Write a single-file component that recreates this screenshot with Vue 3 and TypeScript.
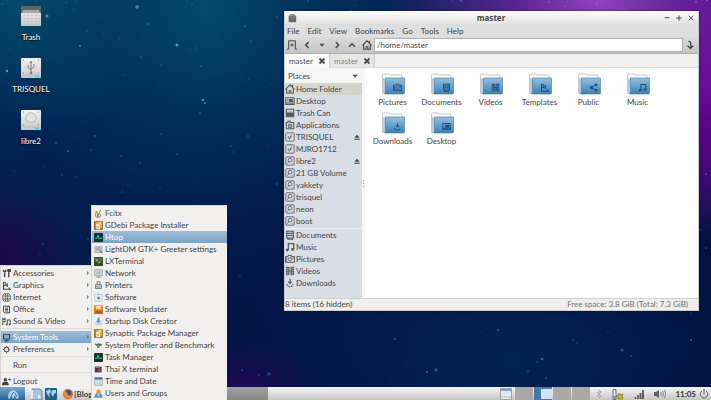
<script setup lang="ts">
import { ref } from 'vue'

interface Entry { label: string; icon: string }
interface Place extends Entry { eject?: boolean }
interface Star { x: number; y: number; r: number; o: number }

const volumes: Entry[] = [
  { label: 'Trash', icon: 'big-trash' },
  { label: 'TRISQUEL', icon: 'big-usb' },
  { label: 'libre2', icon: 'big-disk' },
]
const categories: Entry[] = [
  { label: 'Accessories', icon: 'tools' },
  { label: 'Graphics', icon: 'draw' },
  { label: 'Internet', icon: 'globe' },
  { label: 'Office', icon: 'doc' },
  { label: 'Sound & Video', icon: 'media' },
]
const system: Entry[] = [
  { label: 'System Tools', icon: 'monitor' },
  { label: 'Preferences', icon: 'gear' },
]
const tools: Entry[] = [
  { label: 'Fcitx', icon: 'fcitx' },
  { label: 'GDebi Package Installer', icon: 'package' },
  { label: 'Htop', icon: 'pulse' },
  { label: 'LightDM GTK+ Greeter settings', icon: 'greeter' },
  { label: 'LXTerminal', icon: 'terminal' },
  { label: 'Network', icon: 'network' },
  { label: 'Printers', icon: 'printer' },
  { label: 'Software', icon: 'software' },
  { label: 'Software Updater', icon: 'updater' },
  { label: 'Startup Disk Creator', icon: 'startup' },
  { label: 'Synaptic Package Manager', icon: 'package' },
  { label: 'System Profiler and Benchmark', icon: 'profiler' },
  { label: 'Task Manager', icon: 'pulse' },
  { label: 'Thai X terminal', icon: 'thai' },
  { label: 'Time and Date', icon: 'calendar' },
  { label: 'Users and Groups', icon: 'users' },
]
const menus = ['File', 'Edit', 'View', 'Bookmarks', 'Go', 'Tools', 'Help']
const navigation: Entry[] = [
  { label: 'New tab', icon: 'newtab' },
  { label: 'Back', icon: 'back' },
  { label: 'History', icon: 'caret' },
  { label: 'Forward', icon: 'forward' },
  { label: 'Up', icon: 'up' },
  { label: 'Home', icon: 'home' },
]
const places: Place[] = [
  { label: 'Home Folder', icon: 'home' },
  { label: 'Desktop', icon: 'desktop' },
  { label: 'Trash Can', icon: 'trash' },
  { label: 'Applications', icon: 'apps' },
  { label: 'TRISQUEL', icon: 'usb', eject: true },
  { label: 'MJRO1712', icon: 'usb' },
  { label: 'libre2', icon: 'disk', eject: true },
  { label: '21 GB Volume', icon: 'disk' },
  { label: 'yakkety', icon: 'disk' },
  { label: 'trisquel', icon: 'disk' },
  { label: 'neon', icon: 'disk' },
  { label: 'boot', icon: 'disk' },
]
const bookmarks: Entry[] = [
  { label: 'Documents', icon: 'docs' },
  { label: 'Music', icon: 'music' },
  { label: 'Pictures', icon: 'camera' },
  { label: 'Videos', icon: 'film' },
  { label: 'Downloads', icon: 'download' },
]
const folders: Entry[] = [
  { label: 'Pictures', icon: 'camera' },
  { label: 'Documents', icon: 'docs' },
  { label: 'Videos', icon: 'film' },
  { label: 'Templates', icon: 'draw' },
  { label: 'Public', icon: 'share' },
  { label: 'Music', icon: 'music' },
  { label: 'Downloads', icon: 'download' },
  { label: 'Desktop', icon: 'desktop' },
]

const path = ref('/home/master')
const place = ref('Home Folder')
const tab = ref(0)
const workspace = ref(1)

const bright: Star[] = [
  { x: 137, y: 7, r: 1.8, o: 0.6 }, { x: 177, y: 45, r: 1.5, o: 0.8 }, { x: 203, y: 100, r: 1.3, o: 0.6 },
  { x: 47, y: 16, r: 1.6, o: 0.6 }, { x: 7, y: 71, r: 1.2, o: 0.8 }, { x: 80, y: 46, r: 1, o: 0.6 },
  { x: 205, y: 103, r: 1, o: 0.6 }, { x: 138, y: 236, r: 1, o: 0.3 }, { x: 269, y: 374, r: 1.8, o: 0.3 },
  { x: 436, y: 370, r: 1.8, o: 0.35 }, { x: 622, y: 350, r: 1.5, o: 0.4 }, { x: 542, y: 359, r: 1.3, o: 0.5 },
  { x: 498, y: 330, r: 1, o: 0.5 }, { x: 691, y: 340, r: 1, o: 0.5 }, { x: 706, y: 174, r: 1, o: 0.4 },
]
function scatter(count: number): Star[] {
  let seed = 29
  const next = () => (seed = (seed * 16807) % 2147483647) / 2147483647
  return Array.from({ length: count }, () => {
    const y = next()
    return { x: Math.round(next() * 711), y: Math.round(y * y * 390), r: next() * 0.6 + 0.3, o: next() * 0.5 + 0.12 }
  })
}
const stars: Star[] = [...bright, ...scatter(330)]
</script>

<template>
  <div class="desktop">
    <svg class="sky" viewBox="0 0 711 400" preserveAspectRatio="xMidYMid slice" aria-hidden="true">
      <circle v-for="(s, i) in stars" :key="i" :cx="s.x" :cy="s.y" :r="s.r" :opacity="s.o" fill="#6db4e8" />
    </svg>

    <svg class="library" aria-hidden="true">
      <defs>
        <linearGradient id="metal" x2="0" y2="1"><stop stop-color="#f4f4f3" /><stop offset="1" stop-color="#c6c7c6" /></linearGradient>
        <linearGradient id="blue" x2="0" y2="1"><stop stop-color="#94c1e2" /><stop offset="1" stop-color="#3b81b7" /></linearGradient>
        <linearGradient id="orange" x2="0" y2="1"><stop stop-color="#f5a13c" /><stop offset="1" stop-color="#c2620c" /></linearGradient>
      </defs>
      <symbol id="big-trash" viewBox="0 0 22 22">
        <rect x="1" y="1" width="20" height="20" rx="1" fill="url(#metal)" />
        <path d="M1 1h20v7H1z" fill="#606465" /><path d="M3 5h16l1 3H2z" fill="#a4a8a8" />
        <path d="M4 10v10M8 10v10M12 10v10M16 10v10M19 10v10" stroke="#b4b4b4" stroke-dasharray="1 2" />
      </symbol>
      <symbol id="plate" viewBox="0 0 22 22">
        <rect x="1" y="1" width="20" height="20" rx="1" fill="url(#metal)" />
        <path d="M2 18h18" stroke="#b2b4b4" stroke-width=".7" /><path d="M15 19.500h4" stroke="#51cfd0" stroke-width="1.500" />
        <path d="M3 3h1M18 3h1M3 16h1M18 16h1" stroke="#818686" />
      </symbol>
      <symbol id="big-usb" viewBox="0 0 22 22">
        <use href="#plate" />
        <path d="M11 16V5M11 13L8 10.500V8M11 12l3-2V7" fill="none" stroke="#7b8080" />
        <path d="M9.500 6L11 3.500 12.500 6z" fill="#7b8080" /><circle cx="11" cy="16" r="1.300" fill="#7b8080" />
      </symbol>
      <symbol id="big-disk" viewBox="0 0 22 22">
        <use href="#plate" /><path d="M7 12a5 5 0 1 1 8 0l-2 1H9z" fill="#e6e6e5" stroke="#b7b9b9" />
      </symbol>

      <symbol id="tools" viewBox="0 0 12 12"><path d="M2 1v2l1.500 1L5 3V1M3.500 4v7M8 1h3v2H8zM9 3v8" fill="none" stroke="currentColor" stroke-width="1.800" /></symbol>
      <symbol id="draw" viewBox="0 0 12 12"><path d="M2 1v10h9L9 9M2 6h3V3M7 3v5M4 1v2" fill="none" stroke="currentColor" stroke-width="1.500" /></symbol>
      <symbol id="globe" viewBox="0 0 12 12"><path d="M3 1h6l2 2v6l-2 2H3L1 9V3zM4.500 1v10M7.500 1v10M1 4h10M1 8h10" fill="none" stroke="currentColor" /></symbol>
      <symbol id="doc" viewBox="0 0 12 12"><path d="M2 1.500h8v9H3.500L2 9zM4 4h4M4 6h4M4 8h4" fill="none" stroke="currentColor" stroke-width="1.300" /></symbol>
      <symbol id="media" viewBox="0 0 12 12"><path d="M1 1v10M4 1v6M1 3h3M1 6h3M7 10V4h4v6" fill="none" stroke="currentColor" stroke-width="1.400" stroke-dasharray="3 .5" /><path d="M5 9h2v2H5zM9 9h2v2H9z" fill="currentColor" /></symbol>
      <symbol id="monitor" viewBox="0 0 12 12"><path d="M2 2h8v6H2zM3 10.500h6M6 8v2" fill="none" stroke="currentColor" stroke-width="1.500" /></symbol>
      <symbol id="gear" viewBox="0 0 12 12"><circle cx="6" cy="6" r="3" fill="none" stroke="currentColor" stroke-width="1.300" /><path d="M6 1v2M6 9v2M1 6h2M9 6h2M2.500 2.500l1 1M8.500 8.500l1 1M2.500 9.500l1-1M8.500 3.500l1-1" stroke="currentColor" stroke-width="1.200" /></symbol>
      <symbol id="logout" viewBox="0 0 12 12"><circle cx="4.500" cy="3.500" r="2.300" fill="currentColor" /><path d="M0 11q0-5 4.500-5T9 11z" fill="currentColor" /><path d="M8 3h2V1l2 2.500-2 2V4H8z" fill="currentColor" /></symbol>

      <symbol id="fcitx" viewBox="0 0 12 12"><path d="M3 3l2 3v4L3 11 2 9zM9 1L5 9q0 2 2 2t2-3L7 6" fill="#f7e7b6" stroke="#776035" /><path d="M4 11h4" stroke="#dba11b" stroke-width="1.300" /></symbol>
      <symbol id="package" viewBox="0 0 12 12"><rect width="12" height="12" rx="1" fill="#a86a1e" /><path d="M2 1h9v9H2z" fill="#dca652" /><path d="M3 4h5v7H3z" fill="#f5e8cf" /><path d="M6 1h3v4H6z" fill="#f6d28c" /><path d="M4 8h3" stroke="#99601d" /></symbol>
      <symbol id="pulse" viewBox="0 0 12 12"><rect width="12" height="12" rx="1" fill="#1a302d" /><path d="M1 7h3l1.500-4L7 8l1-1h3" fill="none" stroke="#35dcbb" stroke-width="1.200" /></symbol>
      <symbol id="greeter" viewBox="0 0 12 12"><path d="M1 2h10v8H1z" fill="#c9caca" stroke="#a7aaaa" /><path d="M3 4h6M3 6h4" stroke="#808686" /><path d="M8 7l3 4" stroke="#5b6264" stroke-width="1.500" /></symbol>
      <symbol id="terminal" viewBox="0 0 12 12"><rect width="12" height="12" rx="1" fill="#354e20" /><path d="M1 1h10v5H1z" fill="#506d34" /><path d="M2.500 3l2 1.500-2 1.500M5.500 7H9" fill="none" stroke="#e1edcd" /></symbol>
      <symbol id="network" viewBox="0 0 12 12"><path d="M1 1h10v8H1z" fill="#e2e4e4" stroke="#8d9293" /><path d="M3 3h6v4H3z" fill="#b4b8ba" /><path d="M3 11h7M6 9v2" stroke="#969b9c" stroke-width="1.500" /></symbol>
      <symbol id="printer" viewBox="0 0 12 12"><path d="M4 5V1h4v4M2 5h8v5H2zM3 8h6" fill="#dddfdd" stroke="#737979" stroke-width="1.200" /></symbol>
      <symbol id="software" viewBox="0 0 12 12"><path d="M1 2h10v9H1z" fill="#edf0f1" stroke="#b0b9be" /><path d="M4 2q2-2 4 0" fill="none" stroke="#a4aeb3" /><circle cx="6" cy="6.500" r="2" fill="#5287b2" /></symbol>
      <symbol id="updater" viewBox="0 0 12 12"><rect width="12" height="12" rx="1" fill="url(#orange)" /><path d="M3 1h6v5L7.500 5 6 6 4.500 5 3 6z" fill="#ffe1af" /><path d="M3 9h6" stroke="#894307" /></symbol>
      <symbol id="startup" viewBox="0 0 12 12"><path d="M1 7h10v4H1z" fill="#c9d7df" /><path d="M4.500 1h3v4H10L6 8 2 5h2.500z" fill="#5a9fc5" /></symbol>
      <symbol id="profiler" viewBox="0 0 12 12"><path d="M1 3l3 1 2-1 5 1-1 2-2 1v2H4V7L1 5z" fill="#69794e" /><path d="M5 6l3 2" stroke="#d2cca7" /></symbol>
      <symbol id="thai" viewBox="0 0 12 12"><rect x="1" y="2" width="9" height="8" rx="1" fill="#4a3950" /><path d="M2 3h6" stroke="#d8aabd" /><path d="M5 5h5v4H5z" fill="#a84062" /><path d="M2 10h8" stroke="#aaa" /></symbol>
      <symbol id="calendar" viewBox="0 0 12 12"><path d="M1 1h10v10H1z" fill="#f4f6f7" stroke="#8298b2" /><path d="M1 2h10" stroke="#3974ad" stroke-width="3" /><path d="M3 5h3M7 5h2M3 7h3M3 9h3" stroke="#a1adb6" /><circle cx="9" cy="8.500" r="2" fill="#d7dfe3" stroke="#929da5" stroke-width=".6" /></symbol>
      <symbol id="users" viewBox="0 0 12 12"><path d="M1 11q0-6 5-6t5 6z" fill="#3a8ac5" /><circle cx="6" cy="3.500" r="3" fill="#e99a31" /><path d="M4 7h4l-2 3z" fill="#f8f1df" /><path d="M0 10h12v2H0z" fill="#7cb7dd" /></symbol>

      <symbol id="newtab" viewBox="0 0 12 12"><path d="M0 11h2V1h8v10h2M6 4v4M4 6h4" fill="none" stroke="currentColor" stroke-width="1.200" /></symbol>
      <symbol id="back" viewBox="0 0 12 12"><path d="M8 2.500L4.500 6 8 9.500" fill="none" stroke="currentColor" stroke-width="1.800" /></symbol>
      <symbol id="forward" viewBox="0 0 12 12"><path d="M4.500 2.500L8 6 4.500 9.500" fill="none" stroke="currentColor" stroke-width="1.800" /></symbol>
      <symbol id="up" viewBox="0 0 12 12"><path d="M2.500 8L6 4.500 9.500 8" fill="none" stroke="currentColor" stroke-width="1.800" /></symbol>
      <symbol id="caret" viewBox="0 0 12 12"><path d="M3 4.500h6L6 8z" fill="currentColor" /></symbol>
      <symbol id="go" viewBox="0 0 12 12"><path d="M4 1.500q3 0 3 3V9M3 7l3.500 3L10 7" fill="none" stroke="currentColor" stroke-width="1.500" /></symbol>
      <symbol id="home" viewBox="0 0 12 12"><path d="M.5 6.500L6 1l5.500 5.500M2 6v5h3V8h2v3h3V6M9 1v3" fill="none" stroke="currentColor" stroke-width="1.300" /></symbol>
      <symbol id="desktop" viewBox="0 0 12 12"><path d="M1 2h10v8H1z" fill="none" stroke="currentColor" stroke-width="1.300" /><path d="M2.500 3.500h1v1h-1zM2.500 5.500h1v1h-1zM4.500 3.500h5v4h-5z" fill="currentColor" /><path d="M1 8.500h10" stroke="currentColor" /></symbol>
      <symbol id="trash" viewBox="0 0 12 12"><path d="M1.500 1.500h9v9h-9z" fill="none" stroke="currentColor" stroke-width="1.300" /><path d="M2 6h8v4H2z" fill="currentColor" /><path d="M2 5h8" stroke="currentColor" /></symbol>
      <symbol id="apps" viewBox="0 0 12 12"><path d="M1.500 10.500V3h2V1.500h3V3h4v7.500z" fill="none" stroke="currentColor" stroke-width="1.300" /><path d="M4 5h4M4 7h4M4 9h4M4 5v4M8 5v4" stroke="currentColor" /></symbol>
      <symbol id="drive" viewBox="0 0 12 12"><rect x="1" y="1" width="10" height="10" rx="1" fill="none" stroke="currentColor" /></symbol>
      <symbol id="usb" viewBox="0 0 12 12"><use href="#drive" /><path d="M8 3L5 9M4 5v2l2 1M8 6H6" fill="none" stroke="currentColor" /></symbol>
      <symbol id="disk" viewBox="0 0 12 12"><use href="#drive" /><circle cx="6" cy="5" r="2.200" fill="none" stroke="currentColor" /><path d="M3 9l2-3M8 9h1" stroke="currentColor" /></symbol>
      <symbol id="docs" viewBox="0 0 12 12"><path d="M2 1.500h8v8H2zM2 4h8M2 6.500h8M3.500 9v2H9V9" fill="none" stroke="currentColor" stroke-width="1.300" /></symbol>
      <symbol id="music" viewBox="0 0 12 12"><path d="M4 10V2h6.500v7" fill="none" stroke="currentColor" stroke-width="1.500" /><circle cx="2.700" cy="9.700" r="1.700" fill="currentColor" /><circle cx="9" cy="9" r="1.700" fill="currentColor" /></symbol>
      <symbol id="camera" viewBox="0 0 12 12"><path d="M.7 3h3V1.700h4V3h3.600v7H.7z" fill="none" stroke="currentColor" stroke-width="1.200" /><circle cx="6" cy="6.300" r="2" fill="none" stroke="currentColor" /><path d="M2 4v5M9.500 4v2" stroke="currentColor" /></symbol>
      <symbol id="film" viewBox="0 0 12 12"><path d="M1.500 1h9v10h-9z" fill="currentColor" opacity=".45" /><path d="M2 1v10M10 1v10" stroke="currentColor" stroke-width="2" stroke-dasharray="1.500 .8" /><path d="M4 1v10M8 1v10M4 6h4" stroke="currentColor" /></symbol>
      <symbol id="download" viewBox="0 0 12 12"><path d="M6 1v5M4 4.500l2 2 2-2" fill="none" stroke="currentColor" stroke-width="1.400" /><path d="M2.500 7.500q0 3 3.500 3t3.500-3" fill="none" stroke="currentColor" stroke-width="1.500" stroke-dasharray="2 1" /></symbol>
      <symbol id="share" viewBox="0 0 12 12"><path d="M10 2L3 6l7 4" fill="none" stroke="currentColor" stroke-width="1.300" /><circle cx="9.500" cy="2.300" r="1.700" fill="currentColor" /><circle cx="3" cy="6" r="2" fill="currentColor" /><circle cx="9.500" cy="9.700" r="1.700" fill="currentColor" /></symbol>
      <symbol id="eject" viewBox="0 0 12 12"><path d="M2 7l4-4.500L10 7zM2 8.500h8V10H2z" fill="currentColor" /></symbol>
      <symbol id="cross" viewBox="0 0 12 12"><path d="M3 3l6 6M9 3l-6 6" stroke="currentColor" stroke-width="2.200" /></symbol>
      <symbol id="close" viewBox="0 0 12 12"><path d="M2.500 2.500l7 7M9.500 2.500l-7 7" stroke="currentColor" stroke-width="1.300" /></symbol>
      <symbol id="minus" viewBox="0 0 12 12"><path d="M2.500 5.500h7" stroke="currentColor" stroke-width="1.500" /></symbol>
      <symbol id="plus" viewBox="0 0 12 12"><path d="M2 6h8M6 2v8" stroke="currentColor" stroke-width="1.500" /></symbol>
      <symbol id="files" viewBox="0 0 12 12"><path d="M2 3h2V1.500h5V3h2v8H2z" fill="#666968" /><path d="M4 5h6M4 3h4" stroke="#9a9d9c" /></symbol>
      <symbol id="folder" viewBox="0 0 24 22">
        <path d="M1.500 3V2q0-1 1-1H8l1.500 1H20q1 0 1 1v17H1.500z" fill="#fafafa" stroke="#b9bbbd" stroke-width=".8" />
        <path d="M1 4.500L5 6v15H2.500Q1 21 1 19z" fill="#c3c9cf" />
        <path d="M4.500 5h19v15q0 1-1 1h-19q1-1 1-2z" fill="url(#blue)" stroke="#3f78a5" stroke-width=".6" />
      </symbol>

      <symbol id="lubuntu" viewBox="0 0 14 12"><path d="M2 10Q2 3 7 2q5 1 6 8l-3 1-1-4-2 4-2-3-1 3z" fill="#c3ddef" opacity=".85" /><path d="M5 10q0-4 3-6M9 5l2 4" fill="none" stroke="#37739f" /></symbol>
      <symbol id="filer" viewBox="0 0 14 12"><path d="M2 1h8l2 2v9H2z" fill="#a6c6dd" stroke="#5f86a3" /><path d="M1 2h2v9H1z" fill="#e6edf2" /><path d="M8 6l3 3-3 2z" fill="#e9f4fa" /></symbol>
      <symbol id="web" viewBox="0 0 14 12"><rect x="1" width="12" height="12" rx="1" fill="#1f5d82" /><path d="M2 3l4-2 1 3-2 2 1 4-3-4zM8 2h4v3l-2 1-1 3-2-3z" fill="#9fd5e9" /></symbol>
      <symbol id="firefox" viewBox="0 0 12 12"><circle cx="6" cy="6" r="6" fill="#d8611a" /><circle cx="6.500" cy="5" r="3.500" fill="#28538f" /><path d="M1 2l3 2 2 1-1 2 3 1 3-2q-1 5-5 5T1 7z" fill="#f08b25" /></symbol>
      <symbol id="window" viewBox="0 0 12 12"><path d="M.5 .5h11v11H.5z" fill="#e7e8e8" stroke="#9da3a6" /><path d="M1 2h10" stroke="#75a7ca" stroke-width="2" /><path d="M1 9h10" stroke="#babdbe" /></symbol>
      <symbol id="bluetooth" viewBox="0 0 7 12"><path d="M1 4l4 4-2 2V2l2 2-4 4" fill="none" stroke="#aaa" /></symbol>
      <symbol id="battery" viewBox="0 0 12 12"><path d="M1 1.500h3v10H1z" fill="#e6eaed" stroke="#697075" /><path d="M1.500 8h2v3h-2z" fill="#678ea9" /><path d="M7 5l1 2 3-1-1 2 1 3H6V9L4 8l3-1z" fill="#c8b72a" stroke="#77732c" stroke-width=".8" /></symbol>
      <symbol id="signal" viewBox="0 0 12 12"><path d="M2.500 11V9M5 11V7" stroke="#555" stroke-width="1.500" /><path d="M7.500 11V5M10 11V2" stroke="#555" stroke-width="1.800" /></symbol>
      <symbol id="volume" viewBox="0 0 12 12"><path d="M0 4h2l3-2v8L2 8H0z" fill="#5d5e5f" /><path d="M6.500 4q1.500 2 0 4M8.500 3q2 3 0 6M10.500 2q2.500 4 0 8" fill="none" stroke="#858687" /></symbol>
      <symbol id="power" viewBox="0 0 12 12"><path d="M3.500 2.500a4.500 4.500 0 1 0 5 0M6 0v6" fill="none" stroke="#606162" stroke-width="1.200" /></symbol>
    </svg>

    <ul class="shortcuts">
      <li v-for="v in volumes" :key="v.label">
        <button class="shortcut"><svg><use :href="'#' + v.icon" /></svg><span>{{ v.label }}</span></button>
      </li>
    </ul>

    <main class="window">
      <header class="titlebar">
        <svg class="icon"><use href="#files" /></svg>
        <h1>master</h1>
        <div class="controls">
          <button aria-label="Minimize"><svg><use href="#minus" /></svg></button>
          <button aria-label="Maximize"><svg><use href="#plus" /></svg></button>
          <button aria-label="Close"><svg><use href="#close" /></svg></button>
        </div>
      </header>
      <nav class="menubar"><button v-for="m in menus" :key="m">{{ m }}</button></nav>
      <div class="toolbar">
        <button v-for="n in navigation" :key="n.label" :aria-label="n.label"><svg class="icon"><use :href="'#' + n.icon" /></svg></button>
        <input v-model="path" type="text" aria-label="Location" />
        <button aria-label="Go to location"><svg class="icon"><use href="#go" /></svg></button>
      </div>
      <div class="tabs">
        <div v-for="t in 2" :key="t" class="tab" :class="{ current: tab === t - 1 }">
          <button @click="tab = t - 1">master</button>
          <button aria-label="Close tab"><svg class="icon"><use href="#cross" /></svg></button>
        </div>
      </div>
      <div class="body">
        <aside class="sidebar">
          <button class="heading"><span>Places</span><svg class="icon"><use href="#caret" /></svg></button>
          <ul>
            <li v-for="p in places" :key="p.label" :class="{ selected: place === p.label }">
              <button class="row" @click="place = p.label"><svg class="icon"><use :href="'#' + p.icon" /></svg>{{ p.label }}</button>
              <button v-if="p.eject" class="eject" :aria-label="'Eject ' + p.label"><svg><use href="#eject" /></svg></button>
            </li>
          </ul>
          <ul class="bookmarks">
            <li v-for="b in bookmarks" :key="b.label">
              <button class="row"><svg class="icon"><use :href="'#' + b.icon" /></svg>{{ b.label }}</button>
            </li>
          </ul>
        </aside>
        <div class="splitter"><i></i><i></i><i></i></div>
        <ul class="folders">
          <li v-for="f in folders" :key="f.label">
            <button class="folder">
              <span class="art"><svg class="base"><use href="#folder" /></svg><svg class="emblem"><use :href="'#' + f.icon" /></svg></span>
              <span>{{ f.label }}</span>
            </button>
          </li>
        </ul>
      </div>
      <footer class="status"><span>8 items (16 hidden)</span><span class="space">Free space: 3.8 GiB (Total: 7.3 GiB)</span></footer>
    </main>

    <footer class="panel">
      <button class="start" aria-label="Menu"><svg><use href="#lubuntu" /></svg></button>
      <div class="launchers">
        <button aria-label="File manager"><svg><use href="#filer" /></svg></button>
        <button aria-label="Web browser"><svg><use href="#web" /></svg></button>
      </div>
      <button class="task"><svg class="icon"><use href="#firefox" /></svg>[Blog</button>
      <span class="task-active"></span>
      <div class="tray">
        <button aria-label="Show desktop"><svg class="desk"><use href="#window" /></svg></button>
        <div class="pager">
          <button v-for="n in 4" :key="n" :class="{ active: workspace === n - 1 }" :aria-label="'Workspace ' + n" @click="workspace = n - 1"><i v-if="n === 2"></i></button>
        </div>
        <div class="indicators">
          <svg class="narrow"><use href="#bluetooth" /></svg>
          <svg><use href="#battery" /></svg>
          <svg><use href="#signal" /></svg>
          <svg><use href="#volume" /></svg>
        </div>
        <time>11:05</time>
        <button aria-label="Power"><svg class="icon"><use href="#power" /></svg></button>
      </div>
    </footer>

    <nav class="menu start-menu">
      <button v-for="c in categories" :key="c.label"><svg class="icon"><use :href="'#' + c.icon" /></svg>{{ c.label }}<b></b></button>
      <hr />
      <button v-for="(c, i) in system" :key="c.label" :class="{ hot: i === 0 }"><svg class="icon"><use :href="'#' + c.icon" /></svg>{{ c.label }}<b></b></button>
      <hr />
      <button><svg class="icon"></svg>Run</button>
      <hr />
      <button><svg class="icon"><use href="#logout" /></svg>Logout</button>
    </nav>

    <nav class="menu submenu">
      <button v-for="(t, i) in tools" :key="t.label" :class="{ hot: i === 2 }"><svg class="icon"><use :href="'#' + t.icon" /></svg>{{ t.label }}</button>
    </nav>
  </div>
</template>

<style>
body { background: #021340; overflow: hidden; }
</style>

<style scoped>
.desktop {
  position: relative;
  display: flex;
  flex-direction: column;
  justify-content: space-between;
  min-height: 100vh;
  overflow: hidden;
  color: #444;
  font: 8px/12px Lato, sans-serif;
  background:
    radial-gradient(ellipse 30% 36% at 84% 0, #8f43bf 0, #6c269fcc 40%, transparent 100%),
    radial-gradient(ellipse 12% 42% at 101% 18%, #70009b 0, #5c0687cc 55%, transparent 100%),
    radial-gradient(ellipse 30% 55% at 29% 2%, #034a69 0, #023a6488 50%, transparent 100%),
    radial-gradient(ellipse 22% 34% at 4% 0, #044c69 0, transparent 100%),
    radial-gradient(ellipse 12% 20% at 0 64%, #1d0849 0, transparent 100%),
    radial-gradient(ellipse 12% 14% at 33% 98%, #200858 0, transparent 100%),
    radial-gradient(ellipse 40% 40% at 72% 90%, #002352 0, transparent 100%),
    linear-gradient(160deg, #01295a 0, #021b4b 45%, #030c3c 100%);
}
.sky { position: absolute; inset: 0; width: 100%; height: 100%; }
.library { position: absolute; width: 0; height: 0; }
button {
  display: flex;
  align-items: center;
  margin: 0;
  padding: 0;
  border: 0;
  background: none;
  color: inherit;
  font: inherit;
  white-space: nowrap;
}
ul { margin: 0; padding: 0; list-style: none; }
svg { flex: none; display: block; }
.icon { width: 10px; height: 10px; }

.shortcuts { position: relative; display: flex; flex-direction: column; gap: 14px; width: 62px; padding-top: 5px; }
.shortcut { flex-direction: column; width: 100%; gap: 4px; color: #fff; text-shadow: 0 1px 1px #000; }
.shortcut svg { width: 22px; height: 22px; }

.window {
  position: absolute;
  inset: 11px 12px 89px 284px;
  display: flex;
  flex-direction: column;
  background: #fefefe;
  border: 1px solid #cfcfcf;
  border-top-color: #fff;
  box-sizing: border-box;
  box-shadow: 0 0 2px #0008;
}
.titlebar { display: grid; grid-template-columns: 1fr auto 1fr; align-items: center; height: 12px; padding: 0 3px 0 2px; background: linear-gradient(#fbfbfb, #e2e2e2); }
.titlebar h1 { margin: 0; font: bold 8px/12px "Noto Sans", sans-serif; }
.controls { display: flex; justify-content: flex-end; gap: 4px; }
.controls svg { width: 8px; height: 8px; }
.menubar { display: flex; gap: 8px; height: 13px; padding: 0 2px; background: #dedede; }
.toolbar { display: flex; align-items: center; gap: 5px; height: 16px; padding: 0 3px 0 2px; background: linear-gradient(#dcdcdc, #c4c4c4); border-bottom: 1px solid #b0b0b0; }
.toolbar input {
  flex: 1;
  min-width: 0;
  height: 14px;
  margin: 0 -3px;
  padding: 0 2px;
  border: 1px solid #b2b2b2;
  box-sizing: border-box;
  background: #fff;
  color: inherit;
  font: inherit;
}
.tabs { display: flex; height: 13px; background: #f0efee; border-bottom: 1px solid #e0dedc; }
.tab { display: flex; gap: 4px; padding: 0 2px 0 4px; color: #858585; background: #e8e6e4; border-right: 1px solid #cfcdcb; }
.tab.current { color: #4c4c4c; background: #fafafa; margin-bottom: -1px; }
.tab .icon { color: #4c4c4c; }

.body { display: flex; flex: 1; min-height: 0; }
.sidebar { width: 77px; background: #d8dde6; }
.heading { justify-content: space-between; width: 100%; height: 15px; padding: 0 2px 0 3px; background: #f6f6f6; }
.sidebar li { display: flex; align-items: center; height: 12px; }
.row { flex: 1; gap: 1px; height: 12px; }
.row .icon { color: #54585c; }
.selected { background: linear-gradient(90deg, #dcdad5, #d3d0cb); }
.eject svg { width: 10px; height: 8px; }
.bookmarks { margin-top: 1px; border-top: 1px solid #f0f2f5; }
.splitter { display: flex; flex-direction: column; justify-content: center; gap: 2px; padding: 0 1px; background: #f6f6f6; }
.splitter i { width: 1px; height: 1px; background: #999; }
.folders { flex: 1; display: grid; grid-template-columns: repeat(auto-fill, 49px); grid-auto-rows: 39px; padding: 5px 3px; }
.folder { flex-direction: column; gap: 1px; width: 100%; }
.art { position: relative; }
.base { width: 24px; height: 22px; }
.emblem { position: absolute; right: 3px; bottom: 3px; width: 9px; height: 9px; color: #1c4f79; }
.status { display: flex; justify-content: space-between; height: 11px; padding: 0 10px 0 0; line-height: 11px; background: #f0efee; border-top: 1px solid #cfcfcf; }
.space { color: #707070; }

.panel { position: relative; display: flex; align-items: stretch; height: 13px; background: linear-gradient(#f5f5f5, #c5c5c5); }
.start { justify-content: center; width: 25px; background: linear-gradient(#73a9d2, #266296); }
.start svg { width: 14px; height: 12px; }
.launchers { display: flex; padding: 0 5px; }
.launchers svg { width: 14px; height: 12px; }
.task { width: 164px; gap: 1px; font-weight: bold; }
.task-active { width: 41px; background: linear-gradient(#a2a2a2, #868686); }
.tray { display: flex; align-items: center; gap: 3px; margin-left: auto; padding-right: 2px; }
.desk { width: 12px; height: 12px; }
.pager { display: flex; align-self: stretch; gap: 1px; }
.pager button { justify-content: center; width: 18px; background: #aca9a5; }
.pager .active { justify-content: flex-end; background: #427aa8; }
.pager i { width: 11px; height: 10px; background: #cee6f8; }
.indicators { display: flex; gap: 9px; padding: 0 6px 0 3px; }
.indicators svg { width: 12px; height: 12px; }
.indicators .narrow { width: 7px; }
time { color: #333; font-weight: bold; }

.menu { position: absolute; padding: 1px 0 0; background: #f1f0ef; border: 1px solid #d5d4d3; border-width: 1px 0 0 1px; box-sizing: border-box; }
.menu button { width: 100%; height: 12px; gap: 2px; }
.menu .icon { width: 9px; height: 9px; }
.start-menu { left: 0; bottom: 13px; width: 92px; }
.submenu { left: 91px; bottom: 0; width: 136px; padding-bottom: 1px; }
.start-menu button { padding: 0 3px 0 1px; }
.submenu button { padding: 0 2px; }
.menu hr { height: 1px; margin: 1px 0 2px; border: 0; background: #dcdad8; }
.menu .hot { color: #fff; background: linear-gradient(#9dbeda, #7ca4c6); }
.hot .icon { color: #3c4a57; }
.menu b { margin-left: auto; border: solid transparent; border-width: 2px 0 2px 2px; border-left-color: #777; }
</style>
